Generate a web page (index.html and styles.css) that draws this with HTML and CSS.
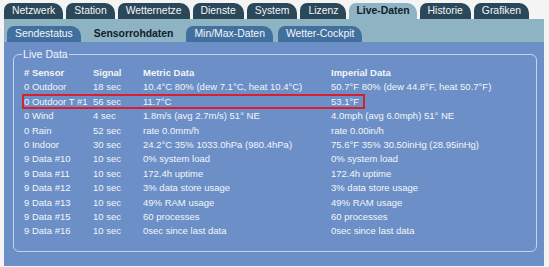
FILE: index.html
```html
<!DOCTYPE html>
<html lang="de">
<head>
<meta charset="UTF-8">
<meta name="viewport" content="width=device-width, initial-scale=1.0">
<title>Live-Daten</title>
<link rel="stylesheet" href="styles.css">
</head>
<body>
<div class="page">
  <ul class="tabs">
    <li class="tab">Netzwerk</li>
    <li class="tab">Station</li>
    <li class="tab">Wetternetze</li>
    <li class="tab">Dienste</li>
    <li class="tab">System</li>
    <li class="tab">Lizenz</li>
    <li class="tab active">Live-Daten</li>
    <li class="tab">Historie</li>
    <li class="tab">Grafiken</li>
  </ul>
  <ul class="subtabs">
    <li class="subtab">Sendestatus</li>
    <li class="subtab active">Sensorrohdaten</li>
    <li class="subtab">Min/Max-Daten</li>
    <li class="subtab">Wetter-Cockpit</li>
  </ul>
  <div class="panel">
    <fieldset class="box">
      <legend>Live Data</legend>
      <div class="mark"></div>
      <table class="data">
        <colgroup>
          <col class="c-sensor">
          <col class="c-signal">
          <col class="c-metric">
          <col>
        </colgroup>
        <tr>
          <th># Sensor</th>
          <th>Signal</th>
          <th>Metric Data</th>
          <th>Imperial Data</th>
        </tr>
        <tr><td>0 Outdoor</td><td>18 sec</td><td>10.4°C 80% (dew 7.1°C, heat 10.4°C)</td><td>50.7°F 80% (dew 44.8°F, heat 50.7°F)</td></tr>
        <tr><td>0 Outdoor T #1</td><td>56 sec</td><td>11.7°C</td><td>53.1°F</td></tr>
        <tr><td>0 Wind</td><td>4 sec</td><td>1.8m/s (avg 2.7m/s) 51° NE</td><td>4.0mph (avg 6.0mph) 51° NE</td></tr>
        <tr><td>0 Rain</td><td>52 sec</td><td>rate 0.0mm/h</td><td>rate 0.00in/h</td></tr>
        <tr><td>0 Indoor</td><td>30 sec</td><td>24.2°C 35% 1033.0hPa (980.4hPa)</td><td>75.6°F 35% 30.50inHg (28.95inHg)</td></tr>
        <tr><td>9 Data #10</td><td>10 sec</td><td>0% system load</td><td>0% system load</td></tr>
        <tr><td>9 Data #11</td><td>10 sec</td><td>172.4h uptime</td><td>172.4h uptime</td></tr>
        <tr><td>9 Data #12</td><td>10 sec</td><td>3% data store usage</td><td>3% data store usage</td></tr>
        <tr><td>9 Data #13</td><td>10 sec</td><td>49% RAM usage</td><td>49% RAM usage</td></tr>
        <tr><td>9 Data #15</td><td>10 sec</td><td>60 processes</td><td>60 processes</td></tr>
        <tr><td>9 Data #16</td><td>10 sec</td><td>0sec since last data</td><td>0sec since last data</td></tr>
      </table>
    </fieldset>
  </div>
</div>
</body>
</html>
```
FILE: styles.css
```css
body {
  font-family: "Liberation Sans", Arial, sans-serif;
  background-color: #f4f4f4;
  margin: 0;
  padding: 0;
}
.page {
  padding: 3px 5px 0 4px;
}
ul {
  list-style: none;
  margin: 0;
  padding: 0;
}
.tabs {
  display: flex;
  gap: 3px;
  height: 16px;
}
.tab {
  background-color: #2b475a;
  color: #f2f6f8;
  font-size: 10.4px;
  line-height: 16px;
  padding: 0 8px 0 8px;
  border-radius: 7px 10px 0 0;
}
.tab.active {
  background-color: #8eb4c4;
  color: #10202a;
  font-weight: bold;
  padding: 0 7px;
}
.subtabs {
  display: flex;
  gap: 5px;
  background-color: #8eb4c4;
  height: 16px;
  padding: 7px 0 0 3px;
}
.subtab {
  background-color: #42709e;
  color: #f2f6fa;
  font-size: 10.4px;
  line-height: 16px;
  padding: 0 8px;
  border-radius: 7px 10px 0 0;
}
.subtab.active {
  background-color: #8eb4c4;
  color: #10202a;
  font-weight: bold;
}
.panel {
  background-color: #6b8fc6;
  padding: 6px 7px 14px 9px;
}
.box {
  position: relative;
  margin: 0;
  border: 1px solid #c2d4ee;
  border-radius: 6px;
  padding: 6px 10px 12px 10px;
  color: #f3f6fb;
}
.box legend {
  font-size: 10.6px;
  padding: 0 1px;
  margin-left: -2px;
}
.data {
  border-collapse: collapse;
  font-size: 9.5px;
  width: 100%;
}
.c-sensor {
  width: 69px;
}
.c-signal {
  width: 50px;
}
.c-metric {
  width: 188px;
}
.data th,
.data td {
  text-align: left;
  padding: 0;
  line-height: 14.4px;
  white-space: nowrap;
}
.data th {
  font-weight: bold;
}
.mark {
  position: absolute;
  left: 8px;
  top: 34px;
  width: 339px;
  height: 11px;
  border: 2px solid #d8202c;
}
```
